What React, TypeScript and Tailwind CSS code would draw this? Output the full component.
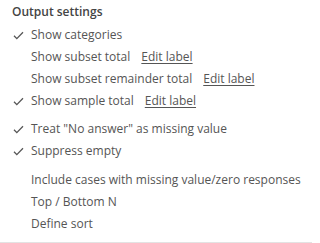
import React from "react";

const Check = () => (
  <svg width="11" height="9" viewBox="0 0 11 9" className="absolute left-[13px] top-[7px]">
    <path d="M1 4.8 L3.8 7.6 L10 1.2" fill="none" stroke="#555" strokeWidth="1.3" />
  </svg>
);

function Row({ checked, label, edit }: { checked?: boolean; label: string; edit?: boolean }) {
  return (
    <div className="relative flex h-[22px] items-center pl-[31px]">
      {checked && <Check />}
      <span>{label}</span>
      {edit && <span className="ml-[11px] underline underline-offset-2">Edit label</span>}
    </div>
  );
}

export default function App() {
  return (
    <div className="w-[312px] h-[243px] bg-white text-[#555] text-[12px]" style={{ fontFamily: '"Open Sans", sans-serif' }}>
      <div className="border-b border-[#e3e3e3] pb-[7px]">
        <div className="pl-[12px] pt-[3px] text-[12px] font-semibold text-[#444] h-[24px] leading-[18px]">Output settings</div>
        <Row checked label="Show categories" />
        <Row label="Show subset total" edit />
        <Row label="Show subset remainder total" edit />
        <Row checked label="Show sample total" edit />
        <div className="h-[6px]" />
        <Row checked label={'Treat "No answer" as missing value'} />
        <Row checked label="Suppress empty" />
        <div className="h-[7px]" />
        <Row label="Include cases with missing value/zero responses" />
        <Row label="Top / Bottom N" />
        <Row label="Define sort" />
      </div>
    </div>
  );
}
